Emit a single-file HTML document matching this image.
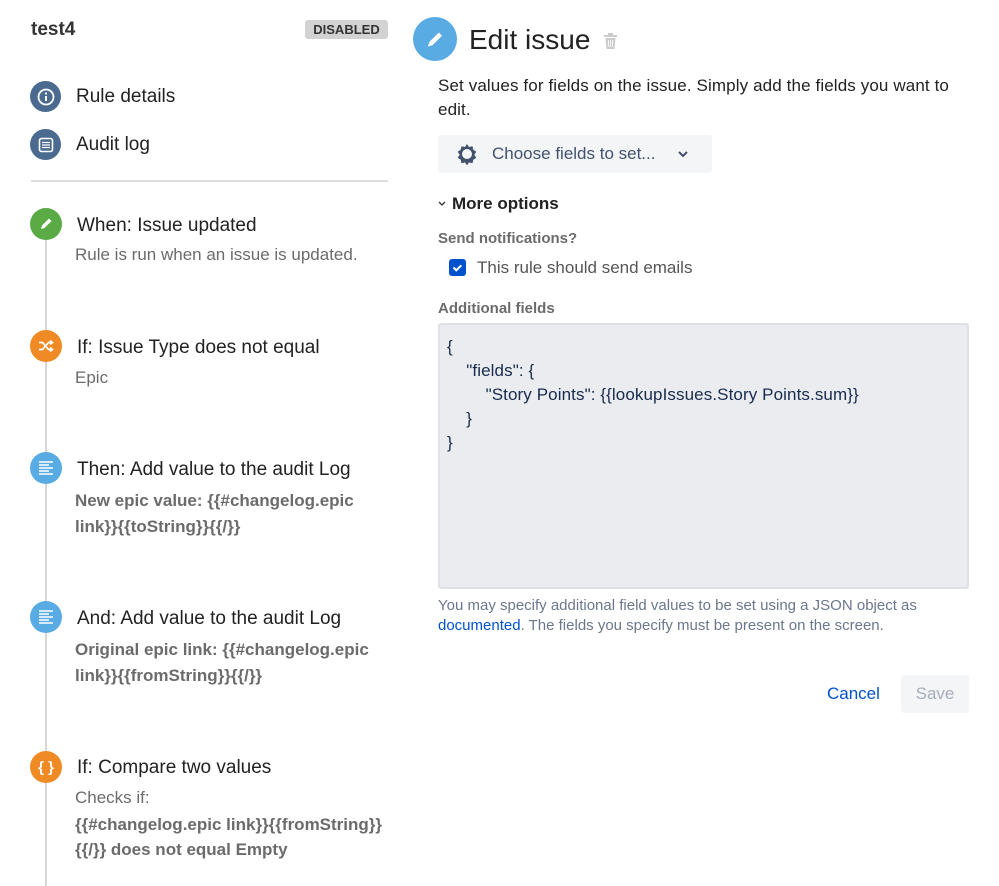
<!DOCTYPE html>
<html><head><style>
*{margin:0;padding:0;box-sizing:border-box}
body{width:999px;height:886px;background:#fff;font-family:"Liberation Sans",sans-serif;position:relative;overflow:hidden;color:#172b4d}
.a{position:absolute;white-space:nowrap}
.c{position:absolute;border-radius:50%;display:flex;align-items:center;justify-content:center}
.h{font-size:19px;color:#222}
.s{font-size:17px;color:#6b6b6b}
.b{font-size:17px;color:#6b6b6b;font-weight:bold}
</style></head><body>
<div class="a" style="left:31px;top:19px;font-size:19px;font-weight:bold;color:#333">test4</div>
<div class="a" style="left:305px;top:20px;width:83px;height:19px;background:#d2d2d2;border-radius:3px;font-size:13px;font-weight:bold;color:#333;text-align:center;line-height:19px">DISABLED</div>
<div class="c" style="left:30px;top:81px;width:31px;height:31px;background:#4a6a8f"><svg width="18" height="18" viewBox="0 0 18 18"><circle cx="9" cy="9" r="7.5" fill="none" stroke="#fff" stroke-width="1.8"/><rect x="8" y="8" width="2" height="5" fill="#fff"/><circle cx="9" cy="5.5" r="1.1" fill="#fff"/></svg></div>
<div class="a h" style="left:76px;top:86px">Rule details</div>
<div class="c" style="left:30px;top:129px;width:31px;height:31px;background:#4a6a8f"><svg width="18" height="18" viewBox="0 0 18 18"><rect x="2.5" y="2.5" width="13" height="13" rx="2" fill="none" stroke="#fff" stroke-width="1.6"/><path d="M5 6.5h8M5 9h8M5 11.5h8" stroke="#fff" stroke-width="1.2"/></svg></div>
<div class="a h" style="left:76px;top:134px">Audit log</div>
<div class="a" style="left:31px;top:180px;width:357px;height:2px;background:#ddd"></div>
<div class="a" style="left:45px;top:225px;width:2px;height:661px;background:#d6d6d6"></div>

<div class="c" style="left:30px;top:208px;width:32px;height:32px;background:#5aaa45"><svg width="16" height="16" viewBox="0 0 16 16"><path d="M3 13l1-3.5 7-7 2.5 2.5-7 7z" fill="#fff"/></svg></div>
<div class="a h" style="left:77px;top:215px">When: Issue updated</div>
<div class="a s" style="left:75px;top:245px">Rule is run when an issue is updated.</div>

<div class="c" style="left:30px;top:330px;width:32px;height:32px;background:#f08a24"><svg width="18" height="16" viewBox="0 0 18 16"><path d="M2 4.5h3.5l6 7H15M2 11.5h3.5l6-7H15M13 2.5l2.5 2-2.5 2M13 9.5l2.5 2-2.5 2" fill="none" stroke="#fff" stroke-width="1.7"/></svg></div>
<div class="a h" style="left:77px;top:337px">If: Issue Type does not equal</div>
<div class="a s" style="left:75px;top:368px">Epic</div>

<div class="c" style="left:30px;top:452px;width:32px;height:32px;background:#59abe3"><svg width="18" height="16" viewBox="0 0 18 16"><path d="M2 2h14M2 5h10M2 8h14M2 11h10M2 14h14" stroke="#fff" stroke-width="1.5"/></svg></div>
<div class="a h" style="left:77px;top:459px">Then: Add value to the audit Log</div>
<div class="a b" style="left:75px;top:488px;line-height:26px">New epic value: {{#changelog.epic<br>link}}{{toString}}{{/}}</div>

<div class="c" style="left:30px;top:601px;width:32px;height:32px;background:#59abe3"><svg width="18" height="16" viewBox="0 0 18 16"><path d="M2 2h14M2 5h10M2 8h14M2 11h10M2 14h14" stroke="#fff" stroke-width="1.5"/></svg></div>
<div class="a h" style="left:77px;top:608px">And: Add value to the audit Log</div>
<div class="a b" style="left:75px;top:637px;line-height:26px">Original epic link: {{#changelog.epic<br>link}}{{fromString}}{{/}}</div>

<div class="c" style="left:30px;top:751px;width:32px;height:32px;background:#f08a24;color:#fff;font-weight:bold;font-size:15px">{ }</div>
<div class="a h" style="left:77px;top:757px">If: Compare two values</div>
<div class="a s" style="left:75px;top:788px">Checks if:</div>
<div class="a b" style="left:75px;top:812px;line-height:25px">{{#changelog.epic link}}{{fromString}}<br>{{/}} does not equal Empty</div>

<div class="c" style="left:413px;top:17px;width:44px;height:44px;background:#59abe3"><svg width="22" height="22" viewBox="0 0 22 22"><path d="M4 18.5l1.3-4.5 9.5-9.5 3.2 3.2-9.5 9.5z" fill="#fff"/></svg></div>
<div class="a" style="left:469px;top:24px;font-size:28px;color:#222">Edit issue</div>
<svg class="a" style="left:603px;top:33px" width="15" height="17" viewBox="0 0 15 17"><rect x="1" y="2" width="13" height="2" fill="#ccc"/><rect x="5" y="0" width="5" height="2" fill="#ccc"/><path d="M2.5 5h10l-1 11h-8z" fill="#ccc"/><path d="M5.5 7v7M7.5 7v7M9.5 7v7" stroke="#fff" stroke-width=".8"/></svg>
<div class="a" style="left:438px;top:74px;font-size:17px;line-height:24px;color:#222;letter-spacing:0.12px">Set values for fields on the issue. Simply add the fields you want to<br>edit.</div>
<div class="a" style="left:438px;top:135px;width:274px;height:38px;background:#f4f5f7;border-radius:3px"></div>
<svg class="a" style="left:455px;top:142px" width="24" height="24" viewBox="0 0 24 24"><path d="M12 2l2 3 3.5-.8.8 3.5 3 2-2 3 2 3-3 2-.8 3.5-3.5-.8-2 3-2-3-3.5.8-.8-3.5-3-2 2-3-2-3 3-2 .8-3.5 3.5.8z" fill="#42526e"/><circle cx="12" cy="12" r="5" fill="#f4f5f7"/></svg>
<div class="a" style="left:492px;top:144px;font-size:17px;color:#42526e">Choose fields to set...</div>
<svg class="a" style="left:677px;top:150px" width="12" height="8" viewBox="0 0 12 8"><path d="M2 2l4 4 4-4" fill="none" stroke="#42526e" stroke-width="2"/></svg>
<svg class="a" style="left:438px;top:201px" width="8" height="6" viewBox="0 0 8 6"><path d="M1 1l3 3 3-3" fill="none" stroke="#333" stroke-width="1.3"/></svg>
<div class="a" style="left:452px;top:194px;font-size:17px;font-weight:bold;color:#222">More options</div>
<div class="a" style="left:438px;top:230px;font-size:15px;font-weight:bold;color:#6b6b6b">Send notifications?</div>
<div class="a" style="left:449px;top:259px;width:17px;height:17px;background:#0052cc;border-radius:3px"><svg width="17" height="17" viewBox="0 0 17 17"><path d="M4.5 8.5l2.8 2.8 5-5" fill="none" stroke="#fff" stroke-width="2"/></svg></div>
<div class="a" style="left:477px;top:258px;font-size:17px;color:#555">This rule should send emails</div>
<div class="a" style="left:438px;top:300px;font-size:15px;font-weight:bold;color:#6b6b6b">Additional fields</div>
<div class="a" style="left:438px;top:323px;width:531px;height:266px;background:#ebecf0;border:2px solid #dfe1e6;border-radius:3px"></div>
<div class="a" style="left:447px;top:335px;font-size:17px;line-height:24px;color:#172b4d;white-space:pre;letter-spacing:0.1px">{
    "fields": {
        "Story Points": {{lookupIssues.Story Points.sum}}
    }
}</div>
<div class="a" style="left:438px;top:596px;font-size:15px;line-height:20px;color:#6b778c">You may specify additional field values to be set using a JSON object as<br><span style="color:#0052cc">documented</span>. The fields you specify must be present on the screen.</div>
<div class="a" style="left:827px;top:684px;font-size:17px;color:#0052cc">Cancel</div>
<div class="a" style="left:901px;top:675px;width:68px;height:38px;background:#f4f5f7;border-radius:3px;font-size:17px;color:#a5adba;text-align:center;line-height:38px">Save</div>
</body></html>
